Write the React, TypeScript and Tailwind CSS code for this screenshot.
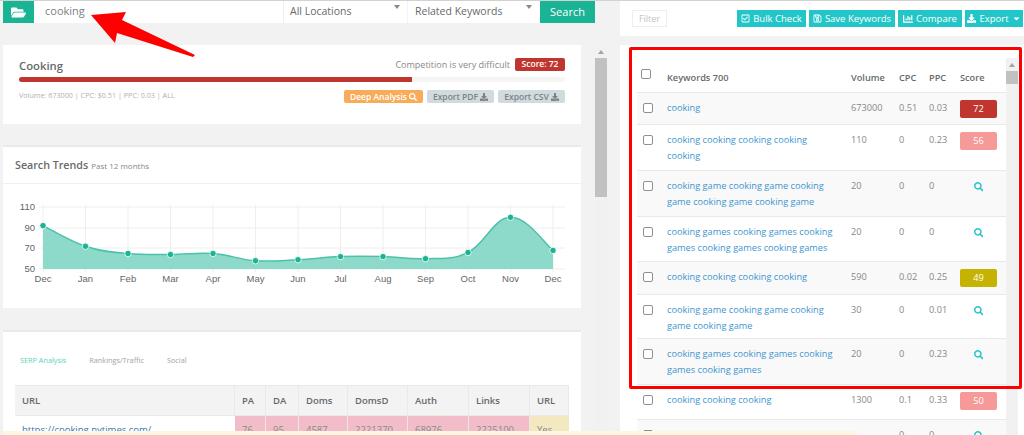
import { FaFolderOpen, FaSearch, FaDownload, FaRegCheckSquare, FaRegSave, FaChartBar, FaCaretDown } from "react-icons/fa";

const months = ["Dec", "Jan", "Feb", "Mar", "Apr", "May", "Jun", "Jul", "Aug", "Sep", "Oct", "Nov", "Dec"];
const trend = [92, 72, 65, 64, 65, 58, 59, 62, 62, 60, 66, 100, 68];

const pts = trend.map((v, i) => ({
	x: 43 + i * 42.5,
	y: 269 - ((v - 50) * 62) / 60,
}));

const linePath = () => {
	let d = `M${pts[0].x} ${pts[0].y}`;
	for (let i = 0; i < pts.length - 1; i++) {
		const p0 = pts[Math.max(i - 1, 0)];
		const p1 = pts[i];
		const p2 = pts[i + 1];
		const p3 = pts[Math.min(i + 2, pts.length - 1)];
		const t = 0.2;
		d += ` C${p1.x + (p2.x - p0.x) * t} ${p1.y + (p2.y - p0.y) * t} ${p2.x - (p3.x - p1.x) * t} ${p2.y - (p3.y - p1.y) * t} ${p2.x} ${p2.y}`;
	}
	return d;
};

const TrendChart = () => {
	const line = linePath();
	return (
		<svg viewBox="3 184 578 123" className="block h-[123px] w-[578px]">
			{[207, 228, 248, 269].map((y) => (
				<line key={y} x1={39} x2={565} y1={y} y2={y} stroke="#eeeeee" strokeWidth={1} />
			))}
			{pts.map((p, i) => (
				<line key={i} x1={p.x} x2={p.x} y1={205} y2={272} stroke="#eeeeee" strokeWidth={1} />
			))}
			<path d={`${line} L${pts[12].x} 269 L${pts[0].x} 269 Z`} fill="#8edaca" />
			<path d={line} fill="none" stroke="#4cc1a9" strokeWidth={1.5} />
			{pts.map((p, i) => (
				<circle key={i} cx={p.x} cy={p.y} r={3.2} fill="#1ab394" stroke="#ffffff" strokeWidth={0.8} />
			))}
			{[
				["110", 210],
				["90", 231],
				["70", 251],
				["50", 272],
			].map(([label, y]) => (
				<text key={label} x={35} y={y} textAnchor="end" fontSize={9.5} fill="#666666" fontFamily="'Liberation Sans', sans-serif">
					{label}
				</text>
			))}
			{months.map((m, i) => (
				<text key={i} x={pts[i].x} y={282} textAnchor="middle" fontSize={9.5} fill="#666666" fontFamily="'Liberation Sans', sans-serif">
					{m}
				</text>
			))}
		</svg>
	);
};

const Scrollbar = ({ className, thumb }: { className: string; thumb: string }) => (
	<div className={`flex flex-col justify-between bg-[#f1f1f1] ${className}`}>
		<div>
			<div className="flex h-[13px] items-center justify-center">
				<div className="h-0 w-0 border-x-[3px] border-b-[4px] border-x-transparent border-b-[#a3a3a3]" />
			</div>
			<div className={`bg-[#c1c1c1] ${thumb}`} />
		</div>
		<div className="flex h-[13px] items-center justify-center">
			<div className="h-0 w-0 border-x-[3px] border-t-[4px] border-x-transparent border-t-[#505050]" />
		</div>
	</div>
);

const Checkbox = () => <div className="h-[10px] w-[10px] rounded-[2px] border border-[#8f8f8f] bg-white" />;

const ToolButton = ({ icon, label, width, caret }: { icon: React.ReactNode; label: string; width: string; caret?: boolean }) => (
	<div className={`flex h-[17px] items-center justify-center gap-[3px] bg-[#23c6c8] text-[9.5px] text-white ${width}`}>
		{icon}
		{label}
		{caret && <FaCaretDown className="text-[9px]" />}
	</div>
);

type Row = {
	keyword: string;
	volume: string;
	cpc: string;
	ppc: string;
	score?: number;
	color?: string;
	height: string;
};

const rows: Row[] = [
	{ keyword: "cooking", volume: "673000", cpc: "0.51", ppc: "0.03", score: 72, color: "bg-[#c0352d]", height: "h-[32px]" },
	{ keyword: "cooking cooking cooking cooking cooking", volume: "110", cpc: "0", ppc: "0.23", score: 56, color: "bg-[#f59a98]", height: "h-[46px]" },
	{ keyword: "cooking game cooking game cooking game cooking game cooking game", volume: "20", cpc: "0", ppc: "0", height: "h-[46px]" },
	{ keyword: "cooking games cooking games cooking games cooking games cooking games", volume: "20", cpc: "0", ppc: "0", height: "h-[45px]" },
	{ keyword: "cooking cooking cooking cooking", volume: "590", cpc: "0.02", ppc: "0.25", score: 49, color: "bg-[#c4b300]", height: "h-[33px]" },
	{ keyword: "cooking game cooking game cooking game cooking game", volume: "30", cpc: "0", ppc: "0.01", height: "h-[44px]" },
	{ keyword: "cooking games cooking games cooking games cooking games", volume: "20", cpc: "0", ppc: "0.23", height: "h-[46px]" },
	{ keyword: "cooking cooking cooking", volume: "1300", cpc: "0.1", ppc: "0.33", score: 50, color: "bg-[#f59a98]", height: "h-[35px]" },
	{ keyword: "cooking cooking cooking", volume: "2", cpc: "0", ppc: "0", height: "h-[32px]" },
];

const keywordGrid = "grid grid-cols-[30px_184px_48px_30px_31px_37px_9px] text-[9.2px]";

const serpCols = "grid grid-cols-[220px_31px_33px_49px_60px_61px_61px_39px]";
const serpHead = ["URL", "PA", "DA", "Doms", "DomsD", "Auth", "Links", "URL"];
const serpCells = ["76", "95", "4587", "2221370", "68976", "2225100"];

export default function App() {
	return (
		<div className="relative flex h-[435px] w-[1024px] overflow-hidden border-t border-[#d2d2d2] bg-[#f2f2f2] font-['Open_Sans',sans-serif] text-[10px] leading-[16px] text-[#888888]">
			<div className="w-[620px] shrink-0 pl-[3px]">
				<div className="flex h-[22px] w-[592px] bg-white text-[10.5px] text-[#676a6c]">
					<div className="flex w-[31px] items-center justify-center bg-[#1ab394] text-[15px] text-white">
						<FaFolderOpen />
					</div>
					<div className="flex w-[249px] items-center pb-[2px] pl-[11px] text-[11px] text-[#7d7f81]">cooking</div>
					<div className="flex w-[124px] items-center justify-between border-l border-[#eeeeee] pb-[2px] pl-[6px] pr-[7px]">
						All Locations
						<div className="mb-[8px] h-0 w-0 border-x-[3px] border-t-[4px] border-x-transparent border-t-[#888888]" />
					</div>
					<div className="flex w-[133px] items-center justify-between border-l border-[#f3f3f3] pb-[2px] pl-[7px] pr-[8px]">
						Related Keywords
						<div className="mb-[8px] h-0 w-0 border-x-[3px] border-t-[4px] border-x-transparent border-t-[#888888]" />
					</div>
					<div className="flex w-[55px] items-center justify-center bg-[#1ab394] pb-[1px] text-[11px] text-white">Search</div>
				</div>
				<div className="flex">
					<div className="mt-[22px] w-[578px] shrink-0">
						<div className="h-[79px] bg-white px-[16px] pt-[12px]">
							<div className="flex h-[14px] items-center justify-between">
								<span className="pt-[3px] text-[11.3px] font-semibold text-[#676a6c]">Cooking</span>
								<div className="flex items-center gap-[5px] text-[9px]">
									<span className="pt-[1px]">Competition is very difficult</span>
									<span className="flex h-[13px] w-[50px] items-center justify-center rounded-[2px] bg-[#c0352d] text-[8.5px] font-semibold text-white">Score: 72</span>
								</div>
							</div>
							<div className="mt-[6px] h-[5px] w-[546px] rounded-full bg-[#f5f5f5]">
								<div className="h-[5px] w-[393px] rounded-l-full bg-[#c0352d]" />
							</div>
							<div className="mt-[8px] flex items-start justify-between">
								<span className="-mt-[1px] text-[7.2px] leading-[13px] text-[#b0b0b0]">Volume: 673000 | CPC: $0.51 | PPC: 0.03 | ALL</span>
								<div className="flex gap-[4px] text-[8.5px] font-semibold">
									<span className="flex h-[13px] w-[79px] items-center justify-center gap-[2px] rounded-[2px] bg-[#f8ac59] text-white">Deep Analysis <FaSearch className="text-[8px]" /></span>
									<span className="flex h-[13px] w-[67px] items-center justify-center gap-[2px] rounded-[2px] bg-[#d1dade] text-[#7d8285]">Export PDF <FaDownload className="text-[8px]" /></span>
									<span className="flex h-[13px] w-[67px] items-center justify-center gap-[2px] rounded-[2px] bg-[#d1dade] text-[#7d8285]">Export CSV <FaDownload className="text-[8px]" /></span>
								</div>
							</div>
						</div>
						<div className="mt-[21px] h-[163px] border-t-2 border-[#e7eaec] bg-white">
							<div className="flex h-[37px] items-center gap-[3px] border-b border-[#f0f0f0] pl-[12px]">
								<span className="text-[10.7px] font-semibold text-[#676a6c]">Search Trends</span>
								<span className="pt-[2px] text-[8px]">Past 12 months</span>
							</div>
							<TrendChart />
						</div>
						<div className="mt-[22px] h-[120px] border-t-2 border-[#e7eaec] bg-white">
							<div className="flex h-[53px] gap-[23px] pl-[17px] pt-[20px] text-[7.3px] text-[#a3a3a3]">
								<span className="text-[#5fd0ba]">SERP Analysis</span>
								<span>Rankings/Traffic</span>
								<span>Social</span>
							</div>
							<div className={`${serpCols} ml-[12px] h-[31px] w-[554px] border-y border-[#e9e9e9] bg-[#f3f3f3] text-[9.5px] font-semibold text-[#676a6c]`}>
								{serpHead.map((h, i) => (
									<div key={i} className="flex items-center border-r border-[#e9e9e9] pl-[7px]">
										{h}
									</div>
								))}
							</div>
							<div className={`${serpCols} ml-[12px] h-[31px] w-[554px] text-[9.5px]`}>
								<div className="pl-[7px] pt-[6px] text-[#337ab7]">https://cooking.nytimes.com/</div>
								{serpCells.map((c) => (
									<div key={c} className="border-r border-[#e9e9e9] bg-[#f2bdc8] pl-[7px] pt-[6px]">
										{c}
									</div>
								))}
								<div className="bg-[#f3e8c0] pl-[7px] pt-[6px]">Yes</div>
							</div>
						</div>
					</div>
					<Scrollbar className="ml-[14px] mt-[22px] h-[400px] w-[12px]" thumb="h-[139px]" />
				</div>
			</div>

			<div className="flex-1">
				<div className="flex h-[35px] items-start justify-between bg-white pl-[12px] pr-[1px] pt-[9px]">
					<div className="flex h-[17px] w-[35px] items-center justify-center border border-[#eeeeee] text-[9px] text-[#c4c4c4]">Filter</div>
					<div className="flex gap-[3px]">
						<ToolButton width="w-[69px]" label="Bulk Check" icon={<FaRegCheckSquare className="text-[9px]" />} />
						<ToolButton width="w-[86px]" label="Save Keywords" icon={<FaRegSave className="text-[9px]" />} />
						<ToolButton width="w-[64px]" label="Compare" icon={<FaChartBar className="text-[10px]" />} />
						<ToolButton width="w-[58px]" label="Export" icon={<FaDownload className="text-[9px]" />} caret />
					</div>
				</div>
				<div className="mt-[9px] flex h-[400px] bg-white">
					<div className="w-[386px] shrink-0 pl-[17px] pt-[15px]">
						<div className={`${keywordGrid} h-[32px] items-center pt-[4px] font-semibold text-[#676a6c]`}>
							<div className="pb-[8px] pl-[4px]">
								<Checkbox />
							</div>
							<div>Keywords 700</div>
							<div>Volume</div>
							<div>CPC</div>
							<div>PPC</div>
							<div>Score</div>
						</div>
						{rows.map((r, i) => (
							<div key={i} className={`${keywordGrid} ${r.height} border-t border-[#e9e9e9] pt-[7px] ${i % 2 === 0 ? "bg-[#f9f9f9]" : "bg-white"}`}>
								<div className="pl-[6px] pt-[3px]">
									<Checkbox />
								</div>
								<div className="pr-[10px] text-[#3d95d0]">{r.keyword}</div>
								<div>{r.volume}</div>
								<div>{r.cpc}</div>
								<div>{r.ppc}</div>
								{r.score ? (
									<div className={`flex h-[18px] items-center justify-center rounded-[2px] text-white ${r.color}`}>{r.score}</div>
								) : (
									<div className="flex h-[18px] items-center justify-center text-[9.5px] text-[#23c6c8]">
										<FaSearch />
									</div>
								)}
							</div>
						))}
					</div>
					<Scrollbar className="mt-[13px] h-[387px] w-[12px]" thumb="h-[13px]" />
				</div>
			</div>

			{/* annotation overlays */}
			<svg viewBox="0 0 200 60" className="absolute left-0 top-0 h-[60px] w-[200px]">
				<polygon points="91,14 126,11 122,19 195,54 193,56 117,32 115,42" fill="#ff0000" />
			</svg>
			<div className="absolute left-[629px] top-[46px] h-[342px] w-[393px] rounded-[2px] border-[3px] border-[#ff0000]" />
			<div className="absolute bottom-0 left-[3px] h-[4px] w-[854px] bg-[#fdf6e0]" />
		</div>
	);
}
